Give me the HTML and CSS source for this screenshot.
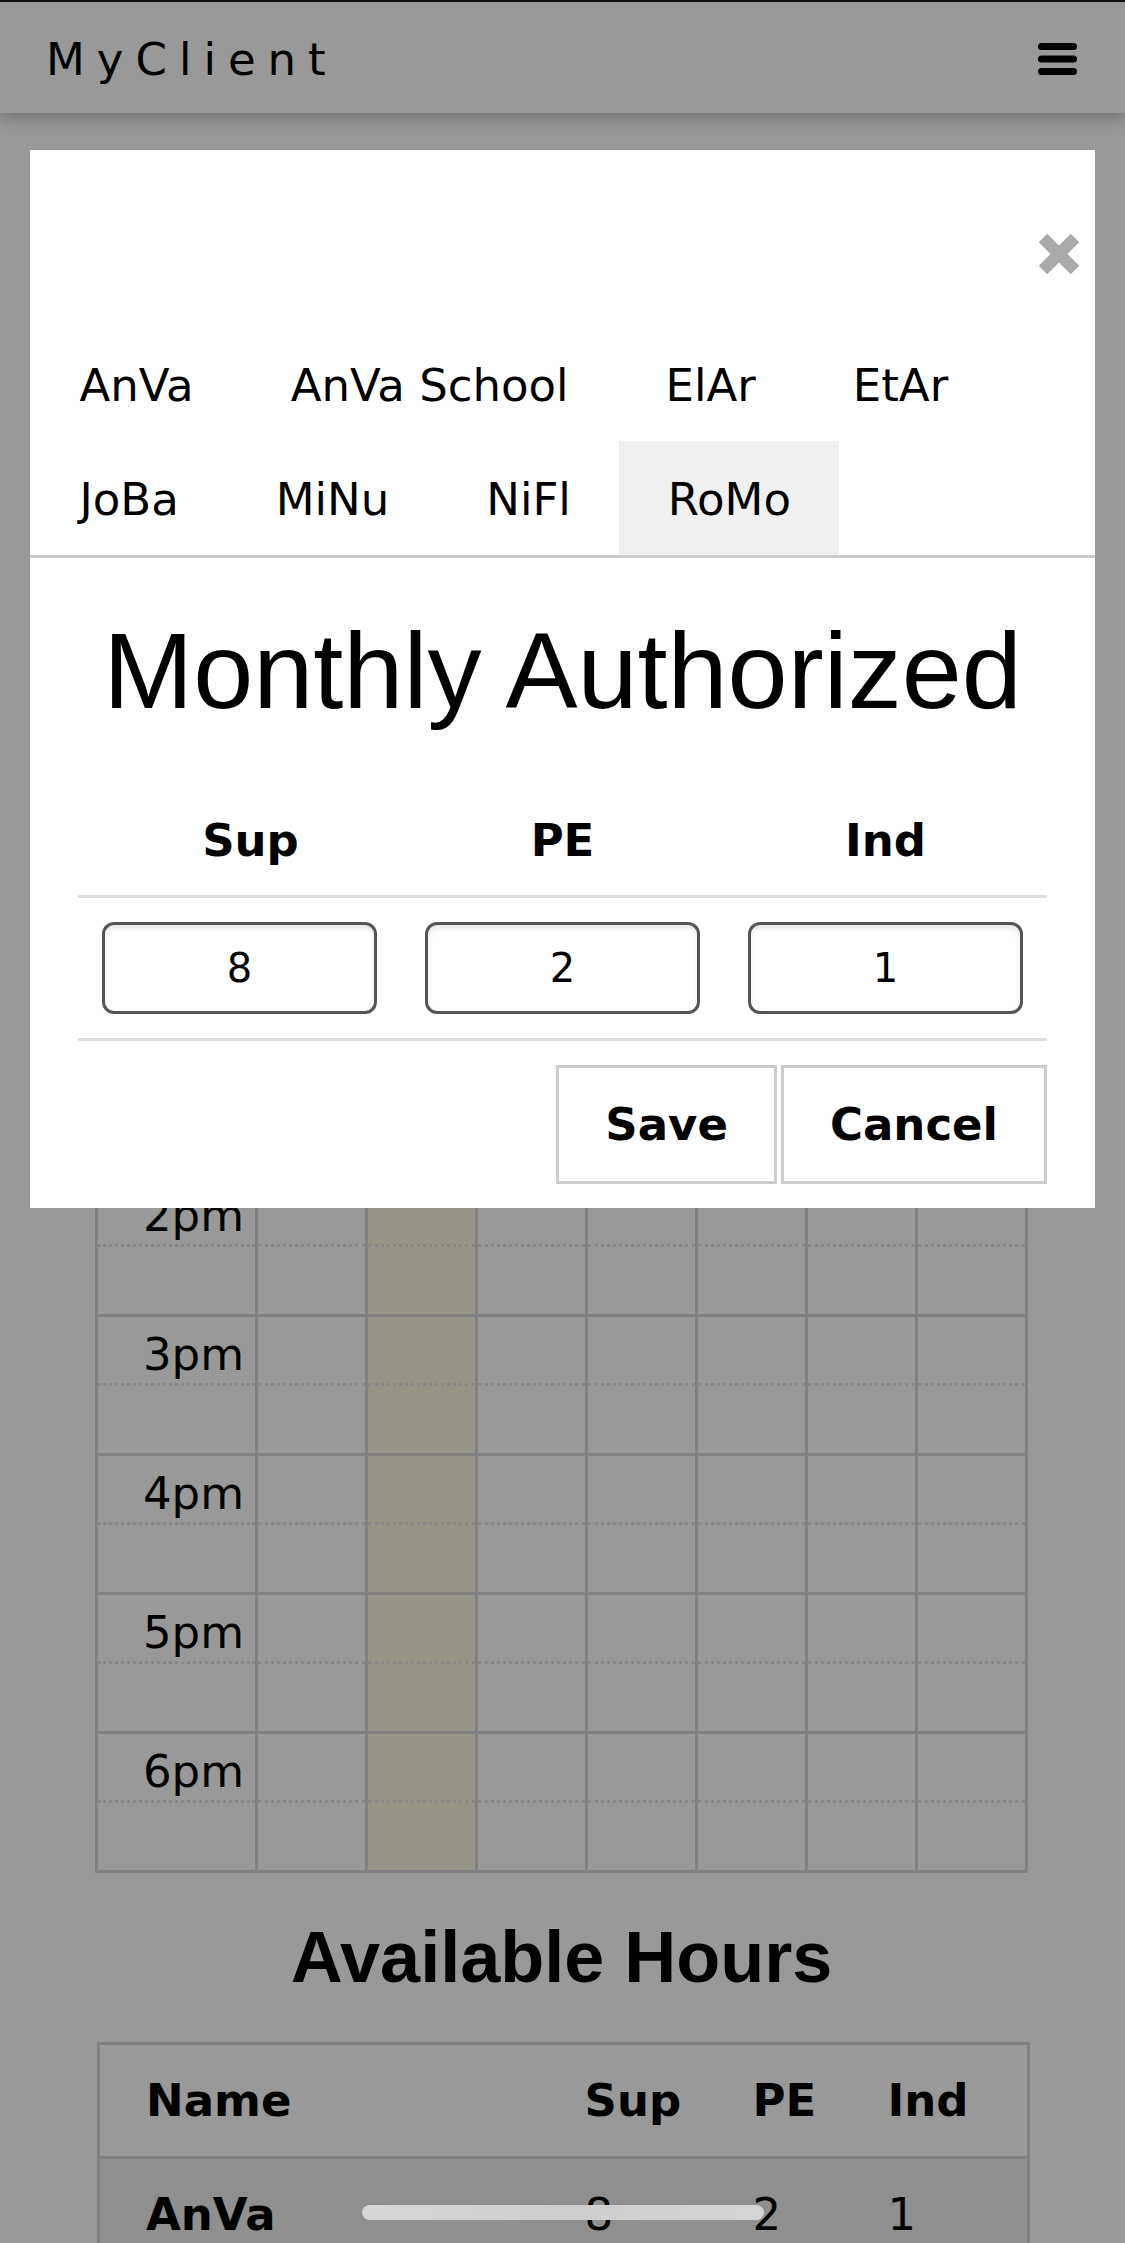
FILE: index.html
```html
<!DOCTYPE html>
<html lang="en">
<head>
<meta charset="utf-8">
<title>MyClient</title>
<link rel="stylesheet" href="styles.css">
</head>
<body>
<header class="nav">
  <div class="brand">MyClient</div>
  <button class="menu" aria-label="Menu">
    <svg width="39" height="32" viewBox="0 0 39 32"><rect x="0" y="0" width="39" height="7" rx="3.5"/><rect x="0" y="12.5" width="39" height="7" rx="3.5"/><rect x="0" y="25" width="39" height="7" rx="3.5"/></svg>
  </button>
</header>

<main class="page">
  <div class="week-bar">
    <span class="week-arrow">&lsaquo;</span>
    <span class="week-title">Week of March 3</span>
    <span class="week-arrow">&rsaquo;</span>
  </div>

  <div class="cal">
    <div class="cal-row cal-head">
      <div class="h"></div><div class="h">Sun</div><div class="h today">Mon</div><div class="h">Tue</div><div class="h">Wed</div><div class="h">Thu</div><div class="h">Fri</div><div class="h">Sat</div>
    </div>
    <div class="cal-row">
      <div class="c time">11am</div><div class="c"></div><div class="c today"></div><div class="c"></div><div class="c"></div><div class="c"></div><div class="c"></div><div class="c"></div>
    </div>
    <div class="cal-row">
      <div class="c time">12pm</div><div class="c"></div><div class="c today"></div><div class="c"></div><div class="c"></div><div class="c"></div><div class="c"></div><div class="c"></div>
    </div>
    <div class="cal-row">
      <div class="c time">1pm</div><div class="c"></div><div class="c today"></div><div class="c"></div><div class="c"></div><div class="c"></div><div class="c"></div><div class="c"></div>
    </div>
    <div class="cal-row">
      <div class="c time">2pm</div><div class="c"></div><div class="c today"></div><div class="c"></div><div class="c"></div><div class="c"></div><div class="c"></div><div class="c"></div>
    </div>
    <div class="cal-row">
      <div class="c time">3pm</div><div class="c"></div><div class="c today"></div><div class="c"></div><div class="c"></div><div class="c"></div><div class="c"></div><div class="c"></div>
    </div>
    <div class="cal-row">
      <div class="c time">4pm</div><div class="c"></div><div class="c today"></div><div class="c"></div><div class="c"></div><div class="c"></div><div class="c"></div><div class="c"></div>
    </div>
    <div class="cal-row">
      <div class="c time">5pm</div><div class="c"></div><div class="c today"></div><div class="c"></div><div class="c"></div><div class="c"></div><div class="c"></div><div class="c"></div>
    </div>
    <div class="cal-row">
      <div class="c time">6pm</div><div class="c"></div><div class="c today"></div><div class="c"></div><div class="c"></div><div class="c"></div><div class="c"></div><div class="c"></div>
    </div>
  </div>

  <h2 class="avail-title">Available Hours</h2>
  <table class="avail">
    <colgroup><col class="col-name"><col class="col-sup"><col class="col-pe"><col class="col-ind"></colgroup>
    <thead>
      <tr><th>Name</th><th>Sup</th><th>PE</th><th>Ind</th></tr>
    </thead>
    <tbody>
      <tr><td class="name">AnVa</td><td>8</td><td>2</td><td>1</td></tr>
      <tr><td class="name">AnVa School</td><td>4</td><td>0</td><td>0</td></tr>
      <tr><td class="name">ElAr</td><td>6</td><td>1</td><td>1</td></tr>
    </tbody>
  </table>
</main>

<div class="overlay"></div>

<div class="modal" role="dialog" aria-label="Monthly Authorized">
  <div class="modal-head">
    <button class="close" aria-label="Close">
      <svg width="40" height="40" viewBox="0 0 40 40"><path d="M4 4L36 36M36 4L4 36" stroke="#aaaaaa" stroke-width="12" fill="none"/></svg>
    </button>
  </div>
  <ul class="tabs">
    <li>AnVa</li>
    <li>AnVa School</li>
    <li>ElAr</li>
    <li>EtAr</li>
    <li>JoBa</li>
    <li>MiNu</li>
    <li>NiFl</li>
    <li class="active">RoMo</li>
  </ul>
  <div class="modal-body">
    <h1 class="modal-title">Monthly Authorized</h1>
    <table class="auth">
      <thead>
        <tr><th class="first">Sup</th><th>PE</th><th>Ind</th></tr>
      </thead>
      <tbody>
        <tr>
          <td><input class="num" type="text" value="8"></td>
          <td><input class="num" type="text" value="2"></td>
          <td><input class="num" type="text" value="1"></td>
        </tr>
      </tbody>
    </table>
    <div class="actions">
      <button class="btn">Save</button>
      <button class="btn">Cancel</button>
    </div>
  </div>
</div>

<div class="scroll-pill"></div>
</body>
</html>
```

FILE: styles.css
```css
html, body {
  overflow: hidden;
}

body {
  margin: 0;
  background: #ffffff;
  color: #000000;
  font-family: "DejaVu Sans", Verdana, sans-serif;
  font-size: 45px;
}

/* ---------- top nav ---------- */
.nav {
  box-sizing: border-box;
  height: 113px;
  border-top: 2px solid #1a1a1a;
  background: #ffffff;
  display: flex;
  justify-content: space-between;
  align-items: flex-start;
  padding: 0 48px 0 46px;
  box-shadow: 0 5px 16px rgba(0, 0, 0, 0.28);
  position: relative;
  z-index: 2;
}

.brand {
  margin-top: 32px;
  font-size: 45px;
  line-height: 52px;
  letter-spacing: 12px;
}

.menu {
  margin-top: 41px;
  padding: 0;
  border: 0;
  background: none;
  line-height: 0;
}

.menu svg {
  fill: #000000;
  display: block;
}

/* ---------- page ---------- */
.page {
  padding: 60px 97px 0 95px;
}

.week-bar {
  height: 445px;
  display: flex;
  align-items: center;
  justify-content: space-between;
  font-size: 45px;
}

.week-title {
  font-weight: bold;
}

.cal {
  width: 933px;
  box-sizing: border-box;
  border-top: 3px solid #d5d5d5;
  border-left: 3px solid #d5d5d5;
}

.cal-row {
  display: grid;
  grid-template-columns: 160px repeat(7, 110px);
}

.h {
  box-sizing: border-box;
  height: 140px;
  border-right: 3px solid #d5d5d5;
  border-bottom: 3px solid #d5d5d5;
  display: flex;
  align-items: center;
  justify-content: center;
  font-size: 30px;
  font-weight: bold;
}

.c {
  box-sizing: border-box;
  height: 139px;
  border-right: 3px solid #d5d5d5;
  border-bottom: 3px solid #d5d5d5;
  position: relative;
}

.c::after {
  content: "";
  position: absolute;
  left: 0;
  right: 0;
  top: 66px;
  border-top: 3px dotted #e2e2e2;
}

.today {
  background: #fcf8e3;
}

.time {
  text-align: right;
  padding: 12px 11px 0 0;
  font-size: 45px;
  line-height: 52px;
}

.avail-title {
  margin: 43px 0 44px;
  text-align: center;
  font-family: "Liberation Sans", Arial, sans-serif;
  font-weight: bold;
  font-size: 72px;
  line-height: normal;
}

.avail {
  width: 930px;
  margin-left: 2px;
  border-collapse: collapse;
  table-layout: fixed;
  border: 3px solid #d5d5d5;
}

.col-name { width: 440px; }
.col-sup { width: 168px; }
.col-pe { width: 135px; }
.col-ind { width: 187px; }

.avail th,
.avail td {
  padding: 29px 0 29px 46px;
  text-align: left;
  font-size: 45px;
  line-height: normal;
  border-bottom: 3px solid #d5d5d5;
}

.avail th,
.avail td.name {
  font-weight: bold;
}

.avail tbody tr:nth-child(odd) td {
  background: #eeeeee;
}

/* ---------- overlay + modal ---------- */
.overlay {
  position: fixed;
  inset: 0;
  background: rgba(0, 0, 0, 0.4);
  z-index: 10;
}

.modal {
  position: absolute;
  top: 150px;
  left: 30px;
  width: 1065px;
  background: #ffffff;
  z-index: 20;
}

.modal-head {
  box-sizing: border-box;
  height: 177px;
  padding: 84px 16px 0 0;
  display: flex;
  justify-content: flex-end;
  align-items: flex-start;
}

.close {
  padding: 0;
  border: 0;
  background: none;
  line-height: 0;
}

.close svg {
  display: block;
  overflow: visible;
}

.tabs {
  list-style: none;
  margin: 0;
  padding: 0 0 0 1px;
  display: flex;
  flex-wrap: wrap;
  border-bottom: 3px solid #cccccc;
}

.tabs li {
  padding: 33px 48.5px 29px;
  font-size: 45px;
  line-height: 52px;
  white-space: nowrap;
}

.tabs li.active {
  background: #f0f0f0;
}

.modal-body {
  padding: 50px 48px 24px;
}

.modal-title {
  margin: 0;
  text-align: center;
  font-family: "Liberation Sans", Arial, sans-serif;
  font-weight: normal;
  font-size: 108px;
  line-height: normal;
}

.auth {
  margin-top: 61px;
  width: 100%;
  border-collapse: collapse;
  table-layout: fixed;
}

.auth th {
  padding: 20px 24px 28px;
  font-size: 45px;
  font-weight: bold;
  text-align: center;
  line-height: normal;
  border-bottom: 3px solid #dddddd;
}

.auth th.first {
  padding-left: 46px;
}

.auth td {
  padding: 24px;
  border-bottom: 3px solid #dddddd;
}

.num {
  display: block;
  box-sizing: border-box;
  width: 100%;
  height: 92px;
  margin: 0;
  padding: 0;
  border: 3px solid #555555;
  border-radius: 12px;
  background: #ffffff;
  box-shadow: inset 0 3px 5px rgba(0, 0, 0, 0.1);
  font-family: "DejaVu Sans", Verdana, sans-serif;
  font-size: 40px;
  color: #000000;
  text-align: center;
}

.actions {
  margin-top: 24px;
  display: flex;
  justify-content: flex-end;
  gap: 4px;
}

.btn {
  box-sizing: border-box;
  height: 119px;
  padding: 0 46px;
  border: 3px solid #cccccc;
  background: #ffffff;
  color: #000000;
  font-family: "DejaVu Sans", Verdana, sans-serif;
  font-size: 45px;
  font-weight: bold;
}

.scroll-pill {
  position: fixed;
  left: 362px;
  top: 2205px;
  width: 402px;
  height: 15px;
  border-radius: 8px;
  background: linear-gradient(90deg, #d6d6d6, #cdcdcd 50%, #d4d4d4);
  z-index: 30;
}
```
